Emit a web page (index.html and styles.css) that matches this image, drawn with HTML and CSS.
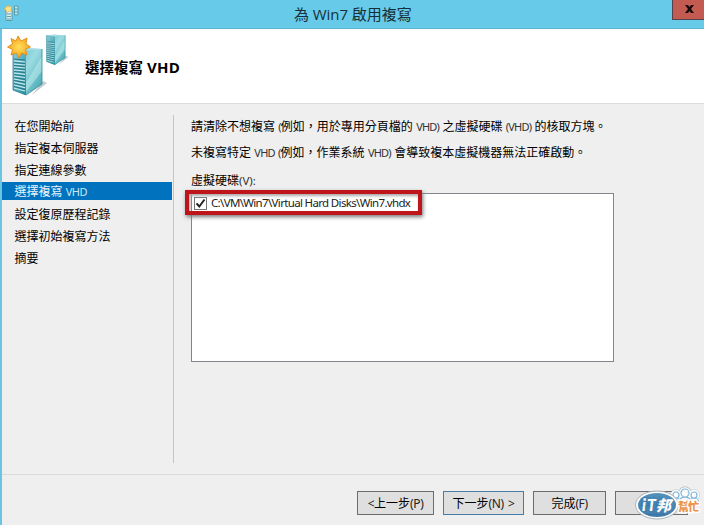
FILE: index.html
```html
<!DOCTYPE html>
<html lang="zh-Hant">
<head>
<meta charset="utf-8">
<title>為 Win7 啟用複寫</title>
<link rel="stylesheet" href="styles.css">
</head>
<body>
<svg class="defs" width="0" height="0" aria-hidden="true">
  <defs>
    <linearGradient id="front" x1="0" y1="0" x2="1" y2="1"><stop offset="0" stop-color="#8ecfd8"/><stop offset="1" stop-color="#238fa0"/></linearGradient>
    <linearGradient id="side" x1="0" y1="0" x2="1" y2="1"><stop offset="0" stop-color="#5fb6c4"/><stop offset=".45" stop-color="#9bdce2"/><stop offset="1" stop-color="#3aa0ad"/></linearGradient>
    <radialGradient id="sun"><stop offset="0" stop-color="#ffe05c"/><stop offset="1" stop-color="#f6a51c"/></radialGradient>
    <linearGradient id="oval" x1="0" y1="0" x2="0" y2="1"><stop offset="0" stop-color="#3d86b8"/><stop offset="1" stop-color="#2a6ca3"/></linearGradient>
    <symbol id="server" viewBox="0 0 36 50" preserveAspectRatio="none">
      <path d="M20 48 35 36 31 34Z" fill="#c5cccd"/>
      <path d="M1 2 13 1 30 2 30 37 14 48 1 43Z" fill="url(#side)"/>
      <path d="M1 2 14 4 14 48 1 43Z" fill="url(#front)"/>
      <path d="M1 2 13 1 30 2 14 4Z" fill="#a4dce2"/>
      <path d="M14 36 30 9V24L14 45Z" fill="#c1f0f0" opacity=".5"/>
      <path d="M2 14l11 1M2 17l11 1M2 20l11 1M2 23l11 1M2 26l11 1.300M2 29l11 1.500M2 32l11 2M2 35l11 2.300M2 38l11 2.600M2 41l11 3" stroke="#c8ecef" stroke-width="1.200"/>
      <path d="M2 12l11 1M2 15.500l11 1M2 18.500l11 1M2 21.500l11 1M2 24.500l11 1M2 27.500l11 1.500M2 30.500l11 2M2 33.500l11 2M2 36.500l11 2.500M2 39.500l11 3" stroke="#267687" stroke-width="1"/>
      <path d="M14 48 30 37V2" fill="none" stroke="#2b8997" stroke-width=".8"/>
      <path d="M1 2V43L14 48" fill="none" stroke="#2b7e8d" stroke-width=".8"/>
    </symbol>
    <symbol id="star" viewBox="0 0 24 24">
      <path d="M11 1 14 6 20 3 19 9 23.500 12 18.500 14 20 20 14.500 18 12 23 9.500 18 4 20 5.500 14.500.5 12 5.500 9 4 3.500 9 6Z" fill="url(#sun)" stroke="#e28b16" stroke-width=".9"/>
    </symbol>
  </defs>
</svg>
<div class="window">
  <header class="titlebar">
    <svg class="app-icon" width="17" height="17" viewBox="0 0 17 17">
      <path d="M2 5h6v10.500H2z" fill="#d8eef0" stroke="#5a9cab"/>
      <path d="M3 9h4M3 11.500h4M3 14h4" stroke="#5b9fac"/>
      <path d="M10.500 1h3.500v9h-3.500z" fill="#bfe4e9" stroke="#5a9cab"/>
      <path d="M11 4h3M11 7h3" stroke="#5a9cab"/>
      <path d="M4 0 5 2 8 1 7 4 8 7 5 6 3 8 2 5 0 4 2 3 1 1 3 2Z" fill="#ffe285" stroke="#d2ad56" stroke-width=".6"/>
    </svg>
    <h1 class="title">為 Win7 啟用複寫</h1>
    <div class="close"><svg width="9" height="8" viewBox="0 0 9 8"><path d="M0 0h3l1.500 2L6 0h3L6 4l3 4H6L4.500 6 3 8H0l3-4Z" fill="#170b0a"/></svg></div>
  </header>
  <div class="heading">
    <svg class="heading-icon" width="66" height="66" viewBox="0 0 66 66">
      <use href="#server" x="8" y="12" width="36" height="50"/>
      <use href="#server" x="42" y="-1" width="23" height="32"/>
      <use href="#star" x="3" y="0" width="24" height="24"/>
    </svg>
    <h2>選擇複寫 <span class="latin-bold">VHD</span></h2>
  </div>
  <div class="content">
    <nav class="steps">
      <div class="step">在您開始前</div>
      <div class="step">指定複本伺服器</div>
      <div class="step">指定連線參數</div>
      <div class="step current">選擇複寫 <span class="lat">VHD</span></div>
      <div class="step">設定復原歷程記錄</div>
      <div class="step">選擇初始複寫方法</div>
      <div class="step">摘要</div>
    </nav>
    <main class="panel">
      <p>請清除不想複寫 <span class="lat">(</span>例如，用於專用分頁檔的 <span class="lat">VHD)</span> 之虛擬硬碟 <span class="lat">(VHD)</span> 的核取方塊。</p>
      <p>未複寫特定 <span class="lat">VHD</span> <span class="lat">(</span>例如，作業系統 <span class="lat">VHD)</span> 會導致複本虛擬機器無法正確啟動。</p>
      <p class="label">虛擬硬碟<span class="lat key">(V):</span></p>
      <div class="list">
        <div class="disk">
          <span class="check"><svg width="11" height="11" viewBox="0 0 11 11"><path d="M1.500 5.300 4.300 8.500 9.500 1.500" fill="none" stroke="#222" stroke-width="2"/></svg></span>
          <span class="path">C:\VM\Win7\Virtual Hard Disks\Win7.vhdx</span>
        </div>
        <div class="highlight"></div>
      </div>
    </main>
  </div>
  <footer class="actions">
    <div class="btn prev"><span class="blat">&lt;</span>上一步<span class="blat">(P)</span></div>
    <div class="btn next">下一步<span class="blat">(N) &gt;</span></div>
    <div class="btn finish">完成<span class="blat">(F)</span></div>
    <div class="btn cancel">取消</div>
  </footer>
  <svg class="watermark" width="70" height="38" viewBox="0 0 70 38">
    <g fill="#fff" stroke="#b9c4cc" stroke-width="3.500"><circle cx="41" cy="9" r="4"/><circle cx="50" cy="7" r="5"/><circle cx="59" cy="9" r="4"/><path d="M37 17h26"/></g>
    <g fill="#fff" stroke="#fff" stroke-width="2.500"><circle cx="41" cy="9" r="4"/><circle cx="50" cy="7" r="4.500"/><circle cx="59" cy="9" r="4"/><path d="M36 18h28"/></g>
    <g fill="#fff" stroke="#79b2dc" stroke-width="1.200"><path d="M36 18q0-6 5-6t5 6M54 18q0-6 5-6t5 6M44 18q0-7 6-7t6 7"/><circle cx="41" cy="9" r="3"/><circle cx="50" cy="7" r="4"/><circle cx="59" cy="9" r="3"/></g>
    <ellipse cx="22" cy="19" rx="21.500" ry="14" fill="#fff" stroke="#a4afb7"/>
    <ellipse cx="22" cy="19" rx="19" ry="12" fill="url(#oval)" opacity=".95"/>
    <text class="wm-it" x="7" y="25" textLength="14">iT</text>
    <text class="wm-bang" x="21" y="25">邦</text>
    <text class="wm-halo" x="43" y="25" textLength="21">幫忙</text>
  </svg>
</div>
</body>
</html>
```
FILE: styles.css
```css
* { box-sizing: border-box; }
body { margin: 0; overflow: hidden; font-family: "Liberation Sans", "Noto Sans CJK TC", sans-serif; }
.defs { position: absolute; }
.window {
  position: relative;
  width: 704px;
  height: 525px;
  display: flex;
  flex-direction: column;
  background: #efefef;
  border-left: 2px solid #6bc4e2;
  color: #000;
}
.titlebar {
  height: 29px;
  flex: none;
  display: flex;
  justify-content: space-between;
  align-items: flex-start;
  background: #67cae9;
  border-bottom: 1px solid #60b4d2;
  margin-left: -2px;
}
.app-icon { margin: 5px 0 0 4px; }
.title {
  margin: 0 0 0 19px;
  padding-left: 254px;
  flex: 1;
  text-align: left;
  font: 400 15px/28px "Open Sans", "Noto Sans CJK TC", sans-serif;
  letter-spacing: -.05px;
  color: #16303a;
}
.close {
  width: 32px;
  height: 20px;
  border: 1px solid #55434b;
  border-top: 0;
  border-right: 0;
  background: #c35b52;
  display: flex;
  align-items: center;
  justify-content: center;
  padding: 0 0 1px 2px;
}
.heading {
  height: 75px;
  flex: none;
  display: flex;
  align-items: flex-start;
  background: #fff;
  border-bottom: 1px solid #dcdcdc;
}
.heading-icon { margin: 6px 0 0 2px; flex: none; overflow: visible; }
h2 { margin: 28px 0 0 15px; font-size: 14.5px; line-height: 20px; font-weight: 700; white-space: nowrap; }
.latin-bold { font-family: "Open Sans", sans-serif; font-size: 15px; letter-spacing: .2px; }
.content { height: 370px; flex: none; display: flex; font-size: 12px; }
.steps { width: 172px; height: 348px; margin-top: 11px; border-right: 1px solid #c5c5c5; }
.step { height: 18px; margin-bottom: 4px; padding-left: 12.5px; line-height: 22px; white-space: nowrap; }
.step:first-child { margin-top: 1px; }
.current { width: 170px; line-height: 20px; background: #0072be; color: #e8f4fc; }
.lat { font-family: "Noto Sans", sans-serif; font-size: 11px; letter-spacing: -.8px; color: #333; }
.key { font-size: 11.5px; letter-spacing: 0; }
.current .lat { color: #cde6f5; letter-spacing: -.6px; }
.panel { padding: 13px 0 0 17px; }
p { margin: 0 0 6px; height: 20px; line-height: 20px; white-space: nowrap; }
p.label { margin: 8px 0 2px; }
.list { position: relative; width: 423px; height: 169px; background: #fff; border: 1px solid #82868b; }
.disk { display: flex; align-items: center; height: 18px; padding-left: 2px; }
.check { width: 13px; height: 13px; display: flex; border: 1px solid #777; background: #fff; }
.path { margin-left: 4px; font: 11.5px/18px "Noto Sans", sans-serif; letter-spacing: -.66px; white-space: nowrap; color: #222; }
.highlight { position: absolute; left: -7px; top: -4px; width: 237px; height: 25px; border: 4px solid #be151b; box-shadow: 1px 2px 4px #777, inset 1px 2px 3px #aaa; }
.actions { flex: 1; border-top: 1px solid #dadada; display: flex; gap: 9px; padding: 16px 0 0 355px; font-size: 12px; }
.btn { height: 24px; border: 1px solid #6d6d6d; background: #dfdfdf; line-height: 23px; text-align: center; white-space: nowrap; }
.prev { width: 77px; }
.next { width: 81px; border-color: #467ca5; }
.finish { width: 73px; }
.cancel { width: 73px; }
.blat { font-family: "Noto Sans", sans-serif; letter-spacing: -.4px; word-spacing: 1.5px; color: #222; }
.watermark { position: absolute; left: 633px; top: 486px; opacity: .92; }
.wm-it { font: italic 900 16px Lato, sans-serif; fill: #fff; }
.wm-bang { font: italic 900 15px "Noto Sans CJK TC", sans-serif; fill: #fff; }
.wm-halo { font: 900 11px "Noto Sans CJK TC", sans-serif; fill: #ed8c3a; stroke: #fff; stroke-width: 3px; paint-order: stroke; }
```
